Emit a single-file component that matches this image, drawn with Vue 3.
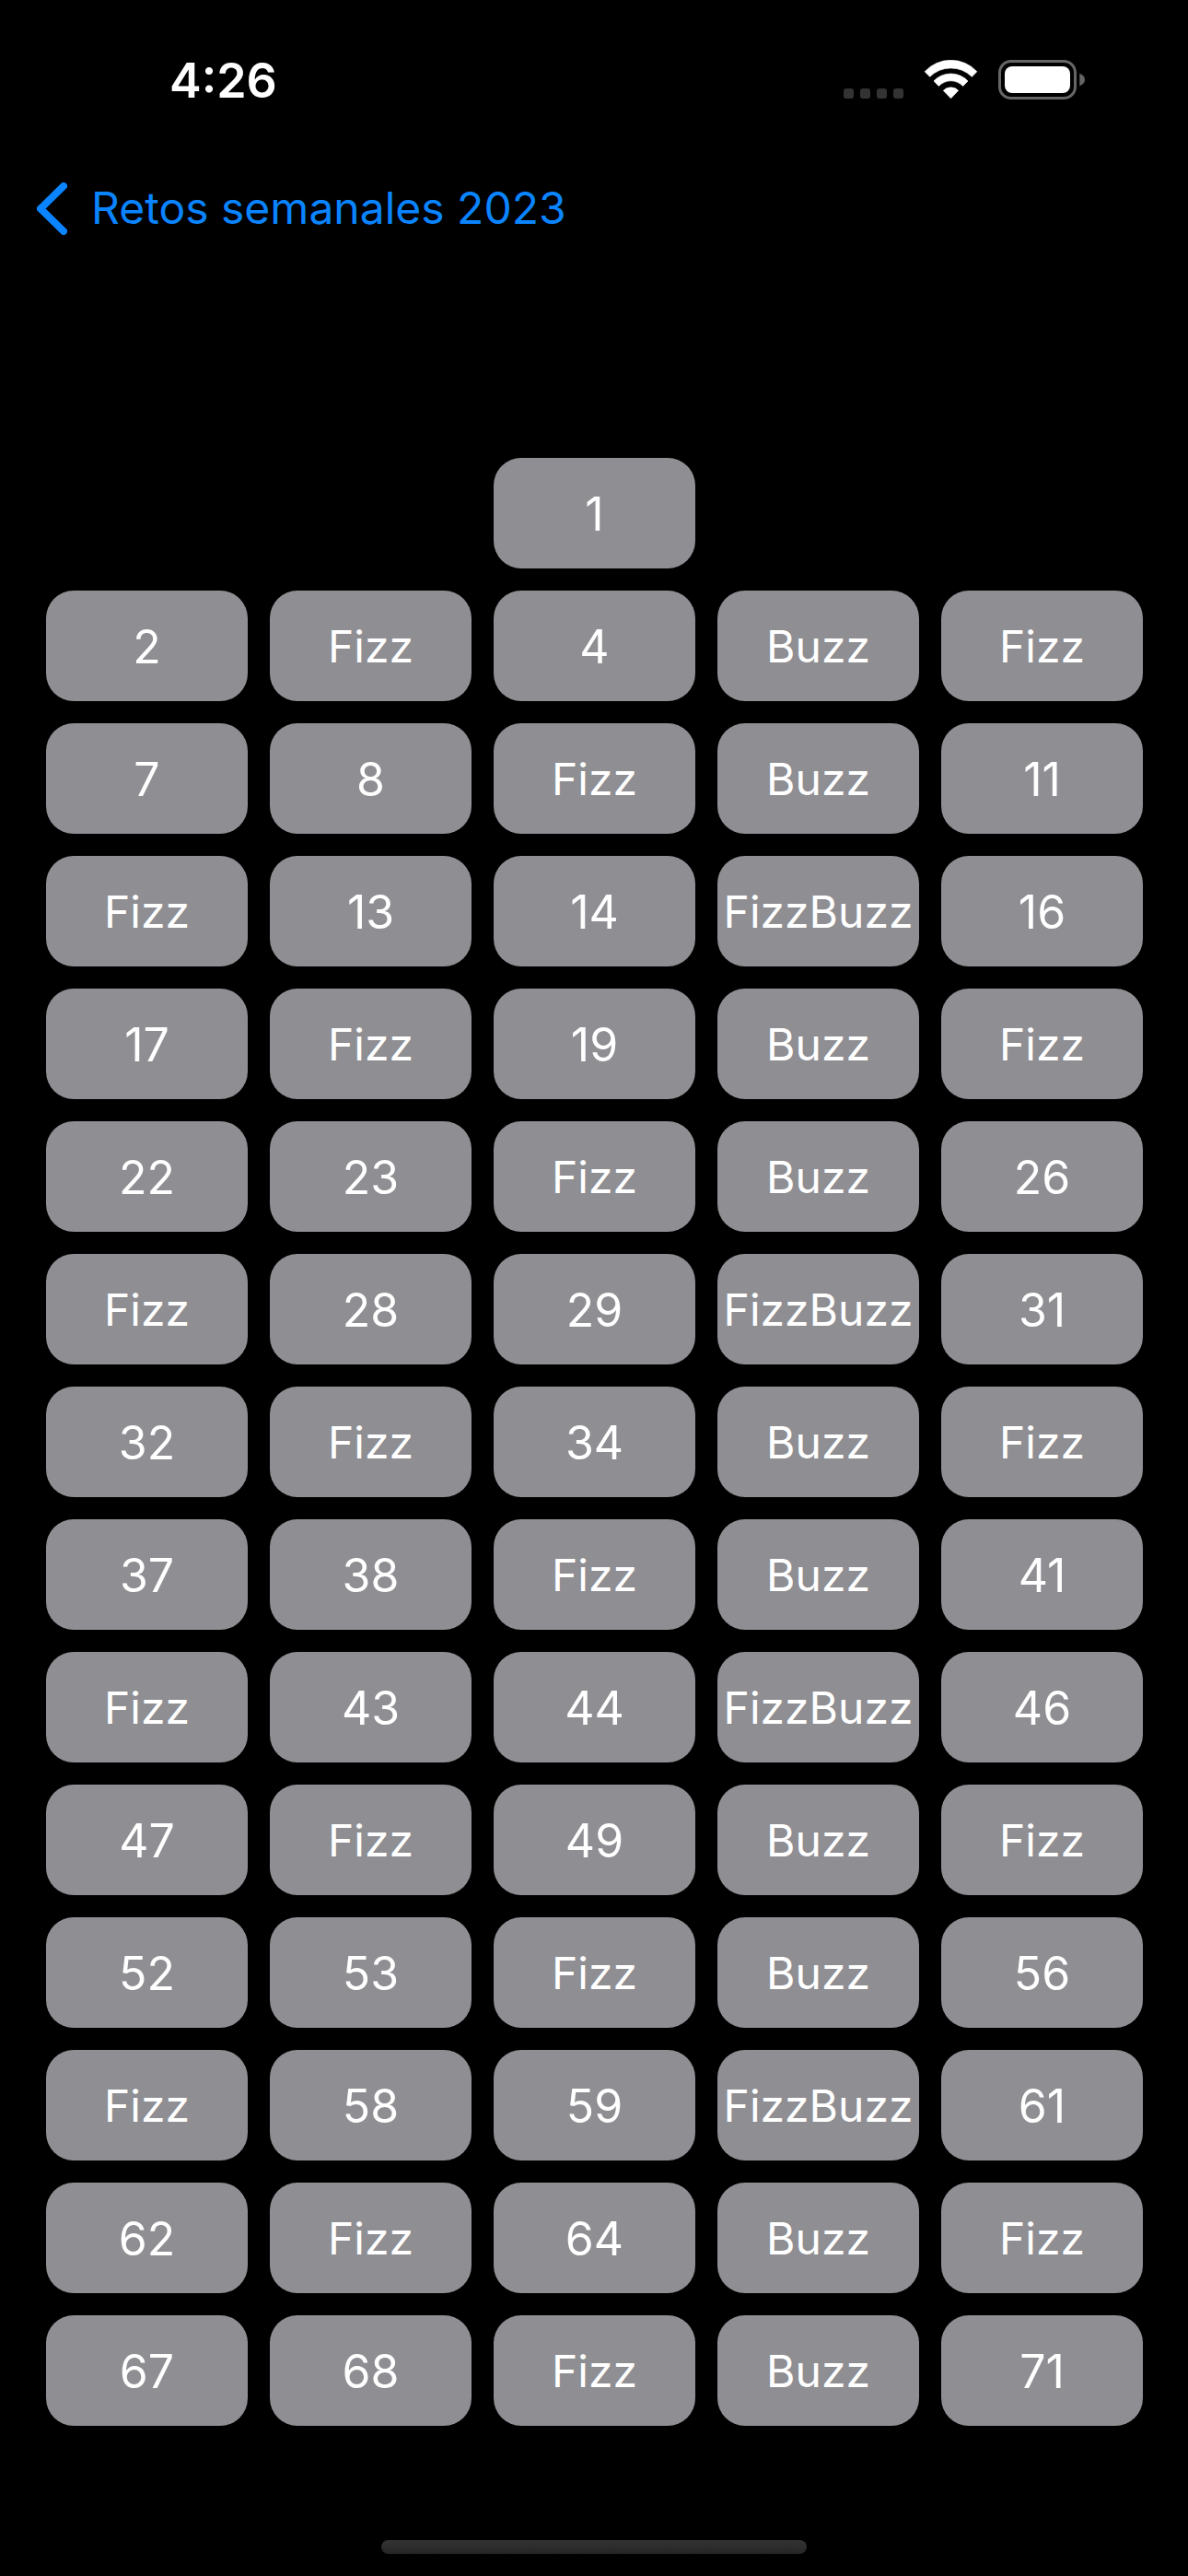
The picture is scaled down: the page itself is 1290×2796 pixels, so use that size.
<script setup>
const LAST = 71

const label = (n) => {
  if (n % 15 === 0) return 'FizzBuzz'
  if (n % 5 === 0) return 'Buzz'
  if (n % 3 === 0) return 'Fizz'
  return String(n)
}

const tiles = Array.from({ length: LAST }, (_, i) => {
  const n = i + 1
  return { n, text: label(n), isNumber: n % 3 !== 0 && n % 5 !== 0 }
})
</script>

<template>
  <div class="screen">
    <header class="status">
      <time class="clock">4:26</time>
      <div class="indicators">
        <svg width="65" height="43" viewBox="0 0 65 43" aria-hidden="true">
          <g fill="#333333">
            <rect x="0" y="31" width="11" height="11" rx="3" />
            <rect x="18" y="31" width="11" height="11" rx="3" />
            <rect x="36" y="31" width="11" height="11" rx="3" />
            <rect x="54" y="31" width="11" height="11" rx="3" />
          </g>
        </svg>
        <svg width="59" height="43" viewBox="339 75 177 129" aria-hidden="true">
          <g fill="#ffffff" stroke="#ffffff" stroke-width="2" stroke-linejoin="round">
            <path d="M342.500 113A116 116 0 0 1 512.500 113L496 130A97 97 0 0 0 359 130Z" />
            <path d="M372 144A76 76 0 0 1 483 144L467 160.500A54 54 0 0 0 388 160.500Z" />
            <path d="M403 175A34 34 0 0 1 452 175L427.500 200.500Z" />
          </g>
        </svg>
        <svg width="94" height="43" viewBox="582 75 282 129" aria-hidden="true">
          <rect x="586.500" y="79.500" width="246" height="120" rx="37" fill="none" stroke="#666666" stroke-width="9" />
          <rect x="603" y="96" width="213" height="87" rx="24" fill="#ffffff" />
          <path d="M847 119C858 123 864 131 864 139.500C864 148 858 156 847 160Z" fill="#666666" />
        </svg>
      </div>
    </header>

    <nav class="nav">
      <a class="back" href="#">
        <svg width="33" height="57" viewBox="0 0 33 57" aria-hidden="true">
          <path d="M29 4L4 28.500L29 53" fill="none" stroke="#0a84ff" stroke-width="8" stroke-linecap="round" stroke-linejoin="round" />
        </svg>
        <span>Retos semanales 2023</span>
      </a>
    </nav>

    <main class="content">
      <ol class="grid">
        <li
          v-for="tile in tiles"
          :key="tile.n"
          class="tile"
          :class="{ first: tile.n === 1, number: tile.isNumber }"
        >{{ tile.text }}</li>
      </ol>
    </main>

    <div class="home"></div>
  </div>
</template>

<style>
body {
  background: #000000;
}
</style>

<style scoped>
.screen {
  box-sizing: border-box;
  min-height: 100vh;
  display: flex;
  flex-direction: column;
  padding-bottom: 24px;
  background: #000000;
  color: #ffffff;
  font-family: Inter, "Liberation Sans", sans-serif;
  font-size: 48px;
  line-height: 60px;
}

.status {
  display: flex;
  align-items: flex-end;
  justify-content: space-between;
  padding: 58px 112px 0 184px;
}

.clock {
  font-size: 52px;
  font-weight: 600;
}

.indicators {
  display: flex;
  gap: 22px;
  padding-bottom: 10px;
}

.nav {
  display: flex;
  padding: 78px 40px 0;
}

.back {
  display: flex;
  align-items: center;
  gap: 26px;
  color: #0a84ff;
  text-decoration: none;
}

.content {
  flex: 1;
  padding: 241px 49px 40px 50px;
}

.grid {
  display: grid;
  grid-template-columns: repeat(5, minmax(0, 1fr));
  gap: 24px;
  margin: 0;
  padding: 0;
  list-style: none;
}

.tile {
  box-sizing: border-box;
  display: flex;
  align-items: center;
  justify-content: center;
  height: 120px;
  padding-top: 2px;
  border-radius: 30px;
  background: #8e8e93;
  white-space: nowrap;
}

.number {
  font-size: 50px;
}

.first {
  grid-column: 1 / -1;
  justify-self: center;
  width: calc((100% - 96px) / 5);
}

.home {
  align-self: center;
  width: 462px;
  height: 15px;
  border-radius: 8px;
  background: linear-gradient(#333333, #262626);
}
</style>
